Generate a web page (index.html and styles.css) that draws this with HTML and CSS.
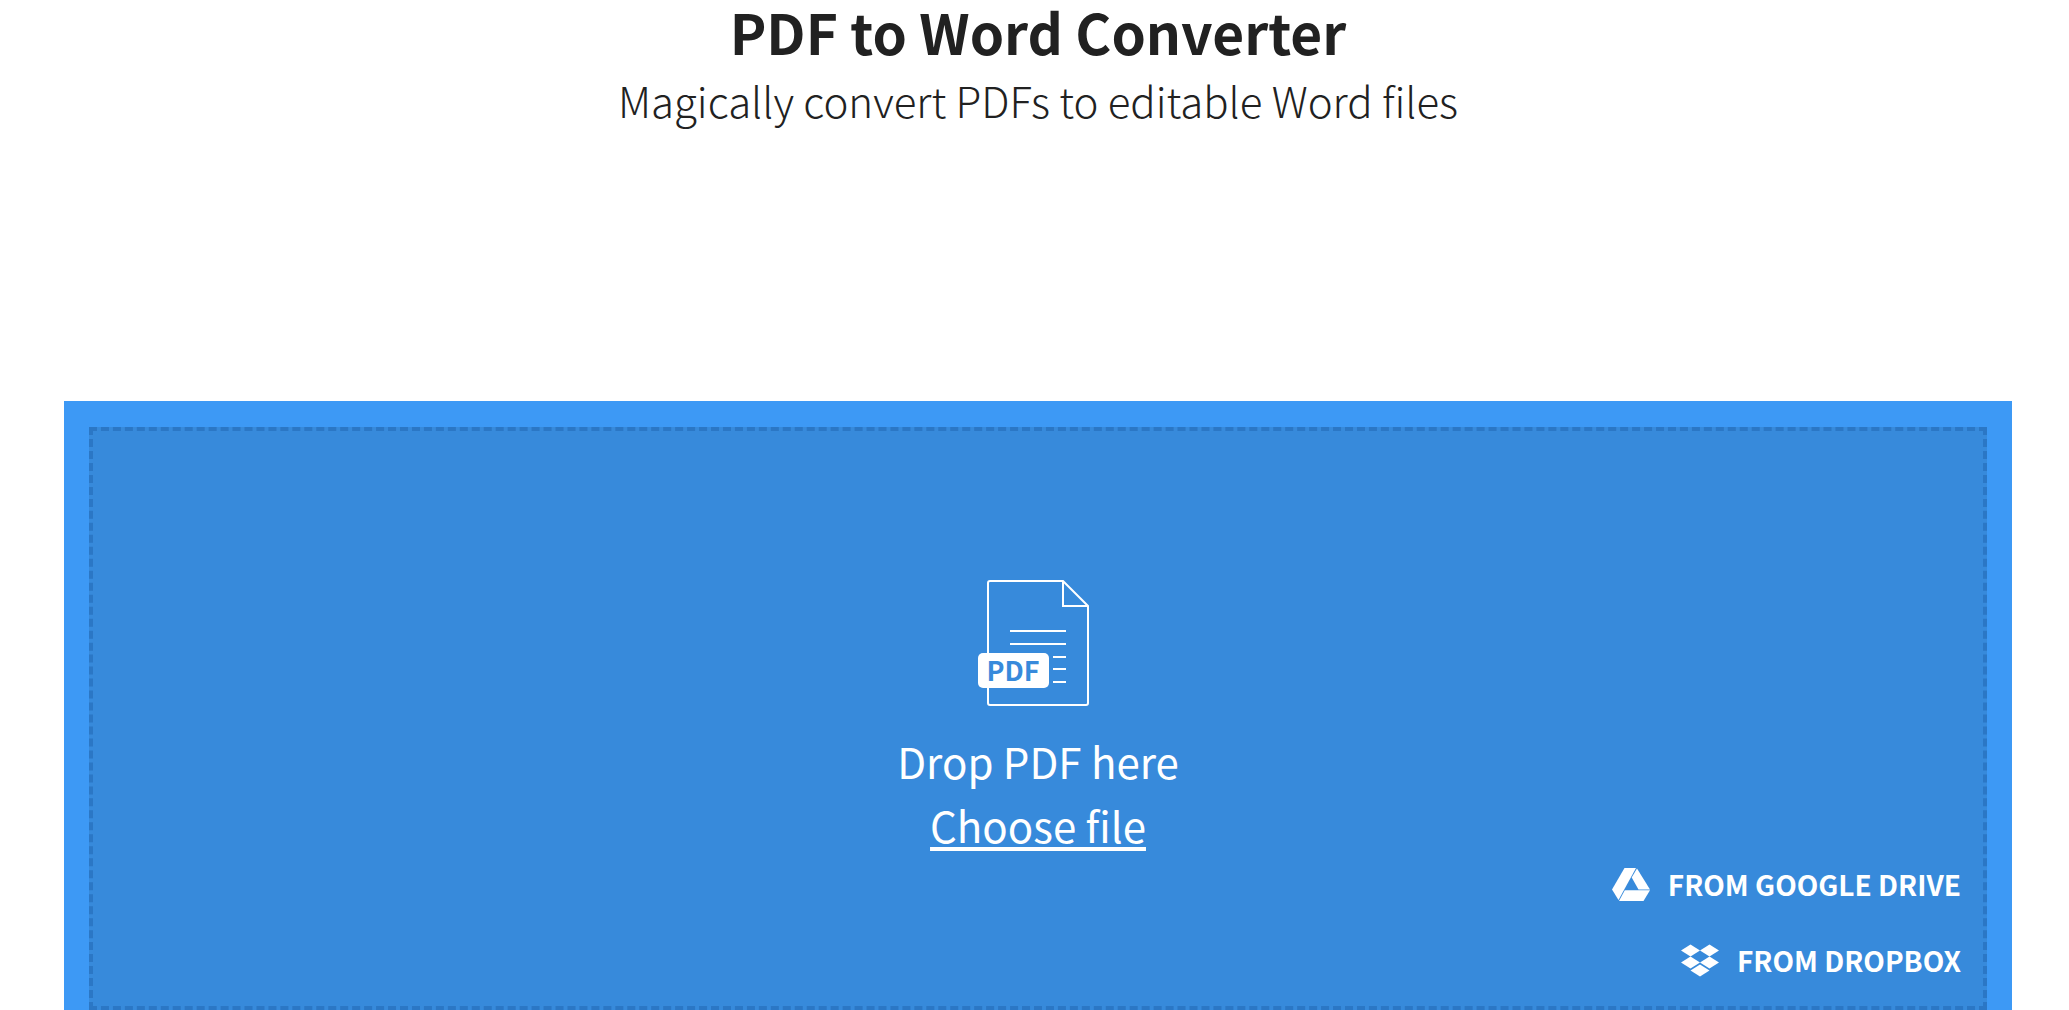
FILE: index.html
```html
<!DOCTYPE html>
<html lang="en">
<head>
    <meta charset="UTF-8">
    <meta name="viewport" content="width=device-width, initial-scale=1.0">
    <title>PDF to Word Converter</title>
    <link rel="stylesheet" href="styles.css">
</head>
<body>
    <header class="page-header">
        <h1>PDF to Word Converter</h1>
        <p class="subtitle">Magically convert PDFs to editable Word files</p>
    </header>

    <main class="uploader">
        <div class="drop-area">
            <svg class="pdf-icon" viewBox="0 0 120 128" aria-hidden="true">
                <g fill="none" stroke="#fff" stroke-width="2">
                    <path d="M85 1H12a2 2 0 0 0-2 2v120a2 2 0 0 0 2 2h96a2 2 0 0 0 2-2V26L85 1v25h25"/>
                    <path d="M32 51h56M32 64h56M75 77h13M75 89h13M75 102h13"/>
                </g>
                <rect x="0" y="73" width="71" height="35" rx="5" fill="#fff"/>
                <text x="35" y="101" text-anchor="middle">PDF</text>
            </svg>
            <p class="drop-text">Drop PDF here</p>
            <button type="button" class="choose-file">Choose file</button>

            <div class="cloud-links">
                <a href="#">
                    <svg class="cloud-icon" viewBox="0 0 38 33" aria-hidden="true">
                        <g fill="#fff">
                            <path d="M12.500 0H24L6.500 32 0 21.500z"/>
                            <path d="M25 .5 38 21.500H26.500L19.700 9.500z"/>
                            <path d="M12.800 22.300H38L31.500 33H7z"/>
                        </g>
                    </svg>
                    FROM GOOGLE DRIVE
                </a>
                <a href="#">
                    <svg class="cloud-icon" viewBox="0 0 38 33" aria-hidden="true">
                        <g fill="#fff">
                            <path d="M9.500 0.500 19 6.500l-9.500 6L0 6.500z"/>
                            <path d="M28.500 0.500 38 6.500l-9.500 6-9.500-6z"/>
                            <path d="M9.500 12.500 19 18.500l-9.500 6L0 18.500z"/>
                            <path d="M28.500 12.500 38 18.500l-9.500 6-9.500-6z"/>
                            <path d="M19 20.500 28.500 26.500 19 32.500l-9.500-6z"/>
                        </g>
                    </svg>
                    FROM DROPBOX
                </a>
            </div>
        </div>
    </main>
</body>
</html>
```
FILE: styles.css
```css
* {
    box-sizing: border-box;
}

body {
    margin: 0;
    padding: 0 57px 0 64px;
    background-color: #fff;
    color: #212121;
    font-family: "Noto Sans CJK SC", "Open Sans", sans-serif;
}

.page-header {
    margin-bottom: 263px;
    text-align: center;
}

h1 {
    margin: 0;
    font-size: 55px;
    font-weight: 600;
    line-height: 62px;
}

.subtitle {
    margin: 0;
    font-size: 42px;
    font-weight: 200;
    line-height: 76px;
}

.uploader {
    padding: 26px 25px;
    background-color: #3d99f5;
}

.drop-area {
    display: flex;
    flex-direction: column;
    align-items: center;
    padding: 149px 22px 19px;
    border: 4px dashed #2b77c5;
    background-color: #378adb;
    color: #fff;
}

.pdf-icon {
    width: 120px;
    height: 128px;
    margin-bottom: 21px;
}

.pdf-icon text {
    fill: #378adb;
    font-size: 27px;
    font-weight: 700;
}

.drop-text,
.choose-file {
    margin: 0;
    padding: 0;
    font-size: 42px;
    font-weight: 400;
    line-height: 64px;
}

.choose-file {
    border: none;
    background: none;
    color: inherit;
    font-family: inherit;
    text-decoration: underline;
    text-decoration-thickness: 4px;
    text-underline-offset: 4px;
    cursor: pointer;
}

.cloud-links {
    display: flex;
    flex-direction: column;
    align-items: flex-end;
    align-self: flex-end;
    gap: 22px;
}

.cloud-links a {
    display: flex;
    align-items: center;
    gap: 18px;
    color: #fff;
    font-size: 28px;
    font-weight: 600;
    line-height: 54px;
    text-decoration: none;
}

.cloud-icon {
    width: 38px;
    height: 33px;
}
```
